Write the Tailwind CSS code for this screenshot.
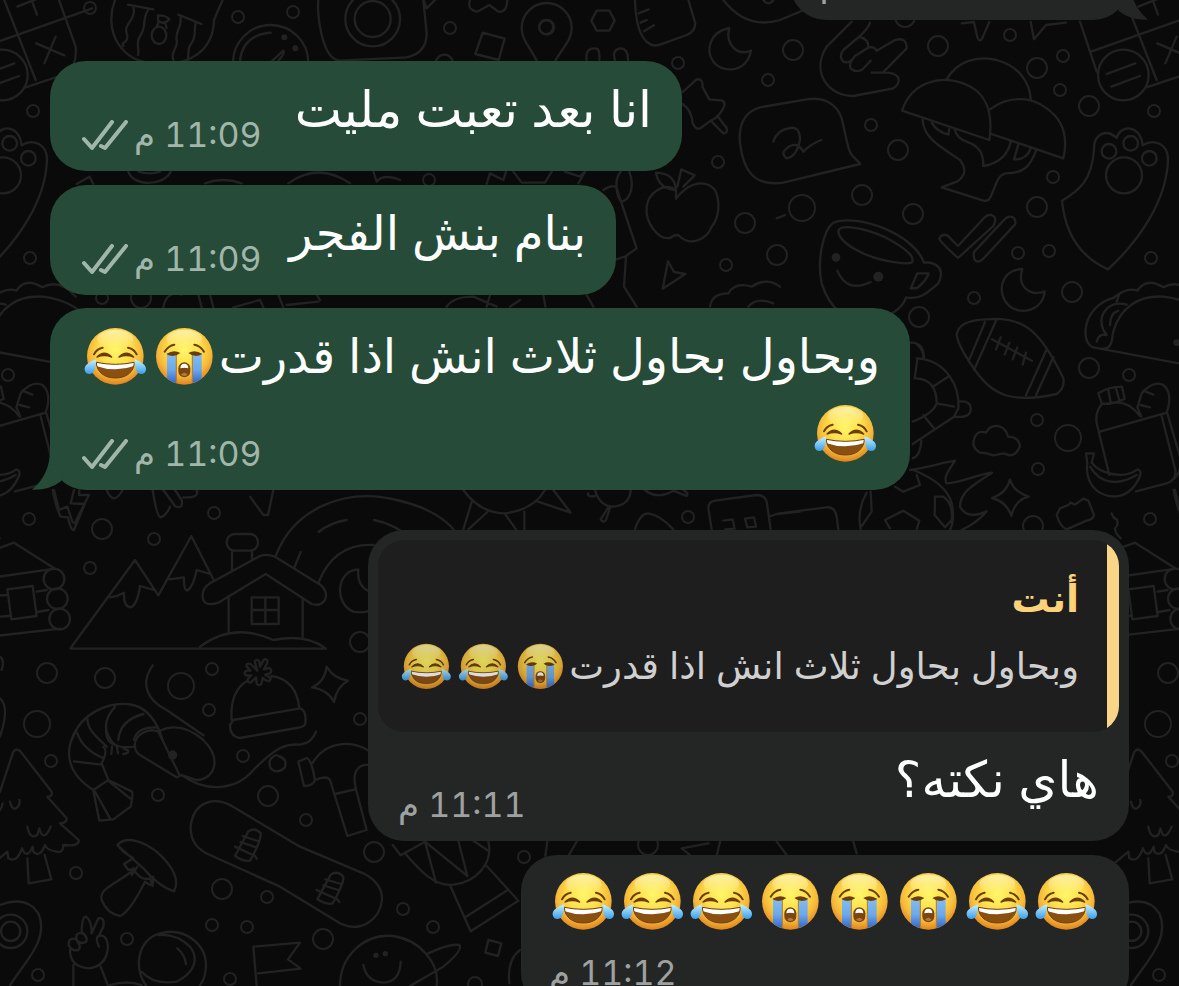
<!DOCTYPE html>
<html lang="ar" dir="rtl">
<head>
    <meta charset="UTF-8">
    <meta name="viewport" content="width=device-width, initial-scale=1.0">
    <title>محادثة</title>
    <script src="https://cdn.jsdelivr.net/npm/@tailwindcss/browser@4"></script>
</head>
<body class="relative h-screen overflow-hidden bg-[#0a0a0a] font-['Inter','DejaVu_Sans',sans-serif] text-white">

    <!-- Shared shapes -->
    <svg class="absolute h-0 w-0" aria-hidden="true">
        <defs>
            <radialGradient id="face" cx="0.5" cy="0.38" r="0.63">
                <stop offset="0" stop-color="#fff66a"/>
                <stop offset="0.45" stop-color="#fddf4b"/>
                <stop offset="0.75" stop-color="#f6b83a"/>
                <stop offset="1" stop-color="#dc801c"/>
            </radialGradient>
            <linearGradient id="shine" x1="0" y1="0" x2="0" y2="1">
                <stop offset="0" stop-color="#fffbd0" stop-opacity="0.7"/>
                <stop offset="1" stop-color="#fffbd0" stop-opacity="0"/>
            </linearGradient>
            <linearGradient id="stream" x1="0" y1="0" x2="0" y2="1">
                <stop offset="0" stop-color="#85bdf0"/>
                <stop offset="0.5" stop-color="#6ba9ec"/>
                <stop offset="1" stop-color="#2457c4"/>
            </linearGradient>
            <linearGradient id="tear" x1="0" y1="0" x2="0" y2="1">
                <stop offset="0" stop-color="#c8f2ff"/>
                <stop offset="1" stop-color="#3a9eea"/>
            </linearGradient>
            <clipPath id="faceClip"><circle r="84"/></clipPath>
            <clipPath id="mouthClip"><path d="M-57 18Q0 30 57 18C56 48 32 65 0 65S-56 48-57 18Z"/></clipPath>
        </defs>
        <symbol id="joy" viewBox="-103 -103 207 207">
            <circle r="85" fill="url(#face)"/>
            <ellipse cy="-52" rx="54" ry="28" fill="url(#shine)"/>
            <path d="M-64-6Q-57-22-38-26M64-6Q57-22 38-26" fill="none" stroke="#6d3d08" stroke-linecap="round" stroke-width="6"/>
            <path d="M-55 2Q-33-21-11 2Q-33-6-55 2ZM55 2Q33-21 11 2Q33-6 55 2Z" fill="#6d3d08" stroke="#6d3d08" stroke-width="4" stroke-linejoin="round"/>
            <g clip-path="url(#mouthClip)">
                <path d="M-60 10H60V70H-60Z" fill="#8a5012"/>
                <path d="M-60 10H60V28Q0 50-60 28Z" fill="#fff"/>
            </g>
            <path d="M-57 18Q0 30 57 18C56 48 32 65 0 65S-56 48-57 18Z" fill="none" stroke="#70400d" stroke-width="3"/>
            <path d="M-57 9C-75 15-94 26-92 40C-90 57-67 57-62 40Q-58 26-57 9ZM57 9C75 15 94 26 92 40C90 57 67 57 62 40Q58 26 57 9Z" fill="url(#tear)"/>
        </symbol>
        <symbol id="sob" viewBox="-103 -103 207 207">
            <circle r="85" fill="url(#face)"/>
            <ellipse cy="-52" rx="54" ry="28" fill="url(#shine)"/>
            <g clip-path="url(#faceClip)">
                <path d="M-52-10H-25V90H-52ZM25-10H52V90H25Z" fill="url(#stream)"/>
                <path d="M-24-4V90M24-4V90" stroke="#b5762a" stroke-width="3"/>
            </g>
            <path d="M-59-14Q-48-32-30-35M59-14Q48-32 30-35" fill="none" stroke="#6d3d08" stroke-width="6" stroke-linecap="round"/>
            <path d="M-54-7Q-32-22-12-10Q-32 6-54-7ZM54-7Q32-22 12-10Q32 6 54-7Z" fill="#6d3d08"/>
            <rect x="-18" y="18" width="36" height="45" rx="18" fill="#7c4510"/>
            <path d="M-12 36Q-12 22 0 22T12 36Q0 32-12 36Z" fill="#fff"/>
            <path d="M-10 55Q0 44 10 55Q0 63-10 55Z" fill="#b07a3a"/>
        </symbol>
        <symbol id="ticks" viewBox="0 0 46 31">
            <path d="M2 19L10 28L30 2M19 26L23 28L44 2" fill="none" stroke="currentColor" stroke-width="4" stroke-linecap="round" stroke-linejoin="round"/>
        </symbol>
        <symbol id="tail" viewBox="0 0 90 120">
            <path d="M54 0C54 50 36 88 0 119Q52 121 88 93L90 0Z" fill="currentColor"/>
        </symbol>
    </svg>

    <!-- Wallpaper -->
    <svg class="absolute top-0 left-0" width="2400" height="1000" aria-hidden="true" fill="none" stroke="#222222" stroke-linecap="round" stroke-linejoin="round">
        <g id="doodles">
            <g stroke-width="2">
                <circle cx="90" cy="8" r="6"/><circle cx="238" cy="17" r="6"/><circle cx="293" cy="12" r="6"/><circle cx="102" cy="298" r="6"/><circle cx="141" cy="298" r="10"/>
                <circle cx="450" cy="28" r="6"/><circle cx="678" cy="63" r="6"/><circle cx="768" cy="80" r="6"/><circle cx="718" cy="162" r="6"/><circle cx="745" cy="223" r="10"/>
                <circle cx="777" cy="255" r="10"/><circle cx="726" cy="265" r="6"/><circle cx="429" cy="180" r="6"/><circle cx="546" cy="27" r="7"/><circle cx="793" cy="50" r="10"/>
                <circle cx="905" cy="17" r="10"/><circle cx="938" cy="46" r="10"/><circle cx="1010" cy="35" r="6"/><circle cx="1037" cy="68" r="10"/><circle cx="1063" cy="56" r="6"/><circle cx="1060" cy="90" r="6"/>
                <circle cx="1089" cy="106" r="10"/><circle cx="871" cy="125" r="6"/><circle cx="898" cy="150" r="10"/><circle cx="862" cy="195" r="10"/><circle cx="802" cy="208" r="13"/>
                <circle cx="913" cy="214" r="10"/><circle cx="1053" cy="177" r="6"/><circle cx="1037" cy="207" r="10"/><circle cx="1154" cy="111" r="6"/><circle cx="974" cy="298" r="6"/>
                <circle cx="1018" cy="253" r="6"/><circle cx="1049" cy="251" r="6"/><circle cx="1072" cy="292" r="10"/><circle cx="1151" cy="258" r="6"/><circle cx="919" cy="317" r="10"/>
                <circle cx="1089" cy="368" r="10"/><circle cx="1129" cy="375" r="6"/><circle cx="1037" cy="420" r="6"/><circle cx="1068" cy="438" r="13"/><circle cx="1038" cy="469" r="6"/>
                <circle cx="1033" cy="526" r="10"/><circle cx="1150" cy="519" r="6"/><circle cx="102" cy="529" r="10"/><circle cx="154" cy="539" r="6"/><circle cx="90" cy="568" r="6"/>
                <circle cx="214" cy="513" r="6"/><circle cx="360" cy="642" r="10"/><circle cx="212" cy="669" r="6"/><circle cx="181" cy="686" r="13"/><circle cx="47" cy="673" r="10"/>
                <circle cx="105" cy="678" r="10"/><circle cx="37" cy="724" r="13"/><circle cx="209" cy="710" r="6"/><circle cx="360" cy="719" r="6"/><circle cx="51" cy="761" r="6"/>
                <circle cx="158" cy="795" r="6"/><circle cx="243" cy="756" r="6"/><circle cx="268" cy="796" r="10"/><circle cx="306" cy="820" r="6"/><circle cx="374" cy="852" r="10"/>
                <circle cx="76" cy="873" r="6"/><circle cx="222" cy="889" r="10"/><circle cx="267" cy="897" r="6"/><circle cx="212" cy="925" r="6"/><circle cx="247" cy="927" r="6"/>
                <circle cx="323" cy="939" r="10"/><circle cx="127" cy="939" r="6"/><circle cx="38" cy="975" r="6"/><circle cx="230" cy="979" r="6"/><circle cx="524" cy="857" r="6"/>
                <circle cx="403" cy="909" r="6"/><circle cx="433" cy="927" r="6"/><circle cx="475" cy="984" r="7"/><circle cx="648" cy="845" r="10"/><circle cx="688" cy="517" r="6"/>
            </g>
            <!-- top left: soap, compass, camera -->
            <g transform="scale(.33333)" stroke-width="7">
                <path d="M345 0C310 90 360 190 470 190C570 200 640 150 642 60Q650 40 668 0M384 14L460 28M400 22C410 60 370 70 380 100S360 125 370 138M444 30C425 60 440 80 422 105S420 145 414 165M535 44L604 72M542 52C545 90 525 90 530 120S510 150 520 180M588 66C580 90 590 110 574 130S570 160 562 184"/>
                <ellipse cx="477" cy="106" rx="22" ry="26"/><path d="M474 46Q500 46 508 58Q490 76 474 62ZM476 66L470 80M495 68L500 84"/>
                <circle cx="812" cy="188" r="113"/><path d="M720 180Q730 105 812 98M815 184L850 152Q856 158 835 182"/>
                <circle cx="853" cy="112" r="9" fill="#222222" stroke="none"/><circle cx="886" cy="145" r="9" fill="#222222" stroke="none"/>
                <circle cx="1118" cy="57" r="82"/><circle cx="1118" cy="57" r="54"/>
                <path d="M955 0C950 40 965 180 1020 182L1220 172Q1280 160 1280 100L1270 0M1270 0L1280 25L1310-5"/>
                <path d="M385 515C400 560 490 560 512 515M415 515Q450 525 480 515M230 552L268 530L280 552M615 550Q670 530 725 550M865 550Q955 485 1050 550M1120 515L1130 545Q1150 520 1200 540"/>
                <path d="M490 922Q500 870 545 884M595 884L605 922M630 884L640 922M700 922L780 900L790 922M835 884L850 922M950 884L960 900M860 915L955 905"/>
            </g>
            <!-- pin, tack, apple, moon -->
            <g transform="translate(390 0) scale(.33333)" stroke-width="7">
                <path d="M240 0Q230 30 262 35L298 15L325 35Q350 40 352 0M278 98L344 116L326 180L256 162ZM440 182C420 140 395 120 395 84A75 75 0 0 1 545 84C545 120 520 140 496 182M620 32H658L674 62L658 92H620L604 62ZM590 180Q585 140 620 146Q630 150 628 180M675 180Q665 150 690 145Q715 145 714 180"/>
                <circle cx="470" cy="82" r="22"/><circle cx="163" cy="190" r="26"/>
                <path d="M735 0Q738 110 780 132Q790 140 810 134L890 105Q915 95 916 70L895 0M746 40L776 28M752 68L770 60M762 94L792 76"/>
                <path d="M1018 84C960 95 945 150 970 185S1070 220 1083 152C1040 170 1005 130 1018 84Z"/>
                <path d="M878 276L920 238Q940 235 938 262L958 298L998 302Q1012 310 990 340Q980 355 962 362L932 384Q918 392 908 370Q905 330 878 312M962 362L1000 400Q1014 400 1010 384L982 348"/>
                <path d="M858 570C820 545 775 580 770 620C765 670 805 720 840 714Q860 700 868 708C900 740 950 720 965 680C990 650 990 600 975 570C950 540 900 540 858 596ZM858 570Q855 520 798 518Q805 565 855 570M862 560L874 508L914 526L880 560"/>
                <path d="M640 570Q670 550 680 565L740 745L708 768Q690 775 678 778M708 770L702 860L740 920M692 515C670 540 680 590 694 605C720 600 735 560 718 515M370 515L395 548H465L485 515M525 515L570 530L585 515L565 550M290 552L300 520L340 540L348 515"/>
                <path d="M834 784L852 816L886 822L818 866ZM960 920Q965 880 1015 880Q1035 845 1085 860Q1130 830 1170 860M1160 655L1185 645M1075 920Q1100 890 1150 910M170 920Q190 890 250 890L320 920M460 885L466 920M590 885L610 920M290 920L300 885M360 920L390 900"/>
                <path d="M1000 0Q1070 90 1170 60L1290 10M1120 0Q1135 20 1150 0"/>
                <path d="M1400 495L1410 490L1390 470Q1378 460 1372 430L1355 355C1340 310 1300 290 1250 298L1110 322C1060 335 1045 380 1050 430C1060 510 1090 560 1180 548L1410 492M1150 425Q1160 390 1200 384Q1230 378 1230 420Q1220 470 1190 475Q1170 460 1190 445Q1220 420 1240 455Q1265 430 1294 420"/>
            </g>
            <!-- right top: hand, tree, cup, paw, chocolate -->
            <g transform="translate(780 0) scale(.33333)" stroke-width="7">
                <path d="M215 65L140 140C90 220 150 290 220 288L340 265Q362 250 354 232Q345 218 315 218H275M270 68Q265 85 240 108L190 150Q175 170 190 185Q205 190 212 182M240 112Q265 115 265 142M272 182L248 208Q228 220 212 205Q205 190 225 168L262 145Q280 135 290 152L345 120Q380 110 380 145L312 214M545 70L582 66L592 112Q600 130 608 112L628 66M752 66L762 118L798 75L858 68"/>
                <path d="M366 332C395 245 480 225 550 250C620 275 640 340 628 420ZM500 238C530 185 590 165 650 180C720 200 750 250 752 298M630 328C680 290 750 285 800 325C850 360 865 410 850 475L634 402"/>
                <path d="M428 360C430 420 500 450 540 480Q570 520 530 545L485 562L610 602Q625 605 632 590C650 550 655 520 680 520C730 520 750 500 768 452M455 368Q470 395 505 404L508 386M524 388Q530 415 560 425C600 440 610 460 610 498Q680 485 692 425M715 434L702 478Q740 480 752 446"/>
                <path d="M644 668Q650 650 634 645Q622 643 612 654L534 738L502 706Q485 700 478 716Q480 725 534 774L640 678ZM706 672Q708 650 690 650Q680 650 670 662L582 756Q578 780 592 785Q602 785 612 774Z"/>
                <path d="M432 788C400 700 230 640 160 668C130 690 110 780 125 850C150 930 200 960 250 960C330 960 370 920 378 892C420 900 440 880 475 850C500 800 460 785 432 788ZM176 690C190 670 280 690 340 725C390 755 405 775 395 788C370 795 280 780 230 750C190 730 172 705 176 690ZM392 866L412 820H446Q440 840 412 864ZM172 812Q200 880 272 846"/>
                <circle cx="168" cy="772" r="13" fill="#222222" stroke="none"/><circle cx="295" cy="830" r="15" fill="#222222" stroke="none"/>
                <path d="M727 807C660 810 650 880 685 915S790 930 794 874C750 890 710 860 727 807Z"/>
                <path d="M846 602C855 700 900 770 984 808C1080 720 1160 600 1164 480C1165 430 1120 415 1088 436C1080 370 1020 375 1010 414C980 385 940 400 942 450C935 540 900 570 846 602Z"/>
                <circle cx="987" cy="454" r="22"/><circle cx="1052" cy="430" r="22"/><circle cx="1108" cy="475" r="22"/><circle cx="1032" cy="526" r="54"/>
                <path d="M900 65L950 215M1020-40L1130 240M935 154L1300 25M1100 262L1220 222Q1255 200 1250 140L1200 0M1075 20L1140-6M1118 0L1134 44M1132 130L1216 166M1190 110L1156 190"/>
                <circle cx="1030" cy="225" r="76"/><path d="M980 222L1066 190M994 260L1080 228"/>
            </g>
            <!-- right middle: football, taco, bag, lifebuoy, ball -->
            <g transform="translate(780 270) scale(.33333)" stroke-width="7">
                <path d="M530 195Q535 150 620 148C740 135 790 200 850 325Q855 355 830 372C700 400 640 380 585 300Q535 230 530 195ZM615 156L568 268M648 152L582 300M800 238L738 376M820 262L768 376M636 208L756 272M662 202L648 238M688 218L674 254M712 232L698 268M738 248L728 284"/>
                <path d="M940 232C900 220 905 110 1000 84Q1040 50 1072 62Q1100 20 1150 52Q1190 30 1230 60L1250 80M940 232L1250 290M965 236C1000 240 995 200 1000 185C1020 110 1080 75 1150 80Q1240 90 1290 150M1010 95L1018 72M1040 104C990 90 950 130 970 180L980 195M950 215Q955 190 980 195M990 165Q990 130 1015 122"/>
                <circle cx="1190" cy="218" r="10" fill="#222222" stroke="none"/>
                <path d="M410 222Q430 240 430 260M410 265C500 270 540 350 535 415L522 440L398 522M410 325Q470 330 470 400Q460 430 398 455M412 268L404 325M508 318L462 348M470 400L522 410M430 436L462 475M535 395Q575 390 572 420Q570 445 522 440M424 512Q420 560 398 565M390 218Q430 215 432 262"/>
                <path d="M600 548Q570 530 585 500Q595 480 618 488Q630 465 655 468Q680 475 684 500Q715 500 720 528Q710 555 690 556L670 550L640 556L620 550Z"/>
                <path d="M390 600C450 590 480 580 525 572C500 610 490 625 500 640C540 640 600 610 636 608C570 650 540 670 540 710Q560 750 620 724Q590 760 545 780M400 600Q500 640 515 700Q525 750 510 780M690 628Q700 665 746 680Q705 690 694 738Q680 695 636 684Q680 670 690 628ZM272 665L275 725L245 768M260 668Q230 720 242 778M330 775L315 750L370 722L418 752L410 778M465 680H490Q520 700 515 750L495 772L464 735ZM370 665L420 645L410 615M345 650L370 665"/>
                <path d="M0 730L140 712Q165 710 170 740L175 778M840 715L865 705L872 698L885 704L910 686L925 692L942 735Q940 748 920 752L860 778Q840 770 830 735ZM995 730Q1000 745 1010 748Q1018 765 1005 775Q1005 790 1022 805"/>
                <path d="M955 370Q985 350 1026 350L1034 386Q1010 400 966 402ZM985 360L992 398M1008 355L1018 390M966 402Q945 425 950 460L988 615M988 402Q1040 385 1080 438M960 485L1160 428Q1180 370 1150 345Q1120 330 1085 370L1072 412L1084 440M1090 362L1120 374M1082 405L1110 412M1144 435L1186 600Q1190 630 1160 640L1068 664M1162 430L1200 560Q1210 610 1170 636M918 550H942L935 578C960 610 1030 630 1072 598Q1085 600 1080 618C1050 690 990 690 950 662Q915 630 922 580ZM930 590C960 640 1010 650 1070 615"/>
                <path d="M1185 660L1200 720L1225 710L1240 755Q1250 765 1252 750L1290 675H1260L1262 650"/>
            </g>
            <!-- cabin and tree on the right edge -->
            <g transform="translate(1121 490) scale(.33333)" stroke-width="7">
                <path d="M-75 200L42 158L165 236M-75 270L165 236M-75 320L20 315M110 305L140 300M-75 385L28 378M112 366L145 360M-75 445L180 416M22 298L98 288L110 378L34 388Z"/>
                <circle cx="162" cy="267" r="31"/><circle cx="172" cy="326" r="31"/><circle cx="179" cy="387" r="31"/>
                <path d="M-70 990L0 905L40 785Q50 772 62 785L155 905Q158 920 142 920L200 985Q200 1000 180 1000L236 1050Q240 1070 190 1065Q190 1090 170 1085Q140 1080 135 1065Q120 1105 100 1085L98 1070Q80 1110 66 1075Q50 1120 25 1105L22 1085L-20 1120M82 1105L86 1180L154 1168L134 1095M30 935Q35 960 48 955Q62 945 58 930M82 1010Q90 1050 112 1035L118 1015Q130 1060 152 1010M-10 970Q5 960 8 940"/>
                <path d="M0 1245Q80 1215 115 1270C150 1350 70 1420 30 1486M0 500Q15 510 5 540M0 625Q30 650 0 740"/>
                <circle cx="32" cy="1324" r="50"/><circle cx="32" cy="1324" r="29"/>
            </g>
            <!-- mountains, house, hat -->
            <g transform="translate(0 490) scale(.33333)" stroke-width="7">
                <path d="M212 476H978Q920 430 820 450Q700 395 600 470M212 474L405 210L475 316L574 138L640 268M330 322Q350 320 372 308Q370 350 392 352Q412 345 420 288L462 300M508 268L552 262Q550 300 562 302Q580 290 590 240L630 252M686 320V425M908 330V440M610 330Q600 300 630 280L780 198Q800 190 825 200L962 285Q985 305 975 330Q960 350 935 342L797 252L655 338Q620 350 610 330M696 240V184M756 184V206M755 322H836V402H755ZM796 322V402M755 360H836"/>
                <rect x="680" y="132" width="94" height="50" rx="24"/>
                <path d="M828 196C880 60 1030-10 1190 30Q1320 60 1370 130M955 280Q1000 160 1120 165M902 186L882 235M956 126Q990 98 1040 90M1122 90Q1180 100 1240 150M1075 238C1010 240 1000 340 1060 365Q1090 370 1110 362M1075 238Q1070 290 1110 305"/>
                <path d="M158 0Q170 60 182 80L204 82Q212 122 222 120L254 42L212 40L222 0M320 0Q340 50 368 0M458 0Q470 80 482 82Q500 75 510 50M490 0L525 48Q550 60 545 30L525 0M550 22Q600 25 590 0M750 20L790 75H804L820 0"/>
                <path d="M695 690C690 630 710 590 742 572M815 558Q890 570 898 655M700 690L900 655Q920 660 916 700Q915 710 890 714L720 744Q690 740 690 705Z"/>
                <path d="M772 542L764 515Q770 505 778 514L780 530L792 508Q804 506 802 518L792 538L808 534Q818 540 810 550L796 554L812 564Q812 576 800 572L788 564L784 582Q774 590 770 580L768 562L752 578Q740 578 744 566L754 556L738 556Q728 548 740 542L752 542L740 530Q738 518 752 522Z"/>
                <path d="M980 530Q1000 565 1044 572Q1010 590 1002 636Q985 600 936 592Q975 575 980 530ZM458 526C420 580 440 630 500 660L610 736M215 750C240 670 330 630 400 645Q460 660 488 750M262 680C260 720 290 740 320 770M345 650C300 700 320 740 345 765M355 750Q360 690 430 672M402 750Q410 710 470 712"/>
            </g>
            <!-- croissant, fish, skateboard, mushroom, hand -->
            <g transform="translate(0 730) scale(.33333)" stroke-width="7">
                <path d="M230 0C190 60 200 130 280 180L325 150L305 100Q325 60 310 50M232 10Q250 60 312 85M222 94L305 104M280 182L298 272L340 268L392 230Q400 190 396 185L325 150M285 185L330 265M328 155L390 205M318 0Q320 40 345 44Q360 55 405 50M336 50L334 72M350 46L354 70M370 55L385 62Q385 70 370 72"/>
                <path d="M405 50C400 20 440-10 475 5L540 138L530 142L420 75Q405 65 405 50M475 5Q540-30 610 30C670 90 640 150 590 150L545 135M545 135C620 190 710 180 760 120C830 50 860 40 900 44Q935 40 948 5M830 75Q800 85 812 115Q830 135 855 112Q862 85 835 78"/>
                <circle cx="518" cy="75" r="14" fill="#222222" stroke="none"/>
                <path d="M690 225C640 200 580 215 572 290Q570 350 630 375L840 470L1020 580C1080 610 1140 570 1146 510Q1148 460 1090 430L900 350ZM705 378L745 304Q765 290 782 310Q785 330 750 392Q730 395 705 378ZM722 336L768 352M705 350L765 378M728 318L776 334M765 378L770 386M952 508L992 434Q1012 420 1030 440Q1032 460 998 520Q980 525 952 508ZM970 466L1015 480M950 480L1012 508M976 448L1024 462M1012 508L1018 516"/>
                <path d="M895 95L920 84Q935 90 945 150Q940 168 912 168ZM938 98C980 30 1060 30 1110 65M945 150Q980 135 990 150L1042 318L1100 300L1068 178Q1050 105 1105 104M1005 192L1065 178"/>
                <path d="M352 345C380 315 430 335 470 365C520 410 540 450 522 484C490 475 460 450 430 415L380 370ZM352 345L370 365L400 385L372 402L385 420L400 418M395 425L320 475Q300 490 305 510Q320 550 360 558Q390 545 435 455M400 415Q420 455 450 445L458 468L460 440M395 435L412 410M435 455L450 465"/>
                <path d="M245 610Q245 560 258 560Q275 570 275 610L295 565Q315 560 310 590L295 620M245 610Q225 605 230 630Q240 645 258 635Q265 625 250 610M230 628Q205 620 206 645Q215 665 235 660Q245 650 232 635M210 660Q210 710 265 715Q320 710 324 650Q320 610 295 618Q285 625 297 650M220 705V770M302 710L325 770"/>
                <path d="M440 768C400 720 410 630 480 610S620 640 618 710Q615 750 598 768M425 725Q460 765 530 755C580 730 600 690 570 650Q530 610 475 615M532 655Q555 675 558 702M330 765Q380 750 425 765M760 650L900 638L864 688L902 716L774 730M760 650L770 768"/>
                <path d="M1020 768C1020 680 1090 610 1180 618C1260 630 1320 700 1310 768M1090 705Q1100 755 1150 758Q1200 755 1202 695M1285 670Q1350 640 1378 645Q1390 660 1330 710L1230 768"/>
                <circle cx="1128" cy="676" r="8" fill="#222222" stroke="none"/><circle cx="1156" cy="671" r="8" fill="#222222" stroke="none"/>
            </g>
            <!-- small cuts between the bubbles -->
            <g transform="translate(380 820) scale(.33333)" stroke-width="7">
                <path d="M38 75L62 106L135 65M75 100C120 150 160 200 220 194C290 185 340 130 325 65M135 65L168 188M135 65L262 168L235 62M280 62L325 92M212 200L272 334L415 242L320 138M258 290L380 212M496 108L502 65M565 108L590 65M325 360L364 370L354 408L316 398ZM420 390Q380 420 388 490M905 85L985 70M1010 108L1020 65M905 85L930 105M1190 65L1220 105M1430 100L1420 65"/>
            </g>
            <g transform="translate(400 480) scale(.33333)" stroke-width="7">
                <path d="M190 30Q240 100 315 100Q400 90 435 30M215 66L190 148M262 96L205 148M315 102L348 148M373 95V148M412 64L512 98L460 30M585 30Q600 80 640 80Q690 75 692 30M565 40Q560 52 585 48M625 82L602 118Q608 130 618 120L630 84M735 30Q770 60 820 32L860 48Q868 40 850 30M705 148Q720 100 745 100Q780 105 820 148M935 148L925 85Q925 65 945 62L1070 45Q1095 45 1100 65L1112 148M970 122L998 118L1004 146L976 148M1035 116L1062 112L1068 140L1042 142ZM1112 108L1130 102L1200 95"/>
            </g>
        </g>
        <use href="#doodles" x="-1121"/>
        <use href="#doodles" x="1121"/>
    </svg>

    <main class="relative flex flex-col items-end px-[50px] leading-[76px] tabular-nums">

        <div class="relative -mt-[90px] flex h-[110px] w-[339px] items-end self-start rounded-[36px] bg-[#242626] pl-[30px]">
            <svg class="absolute right-[-19px] bottom-0 h-10 w-[30px] -scale-x-100 text-[#242626]"><use href="#tail"/></svg>
            <time class="mr-auto mb-[9px] text-[34px] leading-[54px] text-[#9fa1a0]">11:08 م</time>
        </div>

        <div class="mt-[41px] flex h-[110px] w-[632px] max-w-full items-end justify-between rounded-[36px] bg-[#264b39] pr-[30px] pl-8">
            <p class="mb-6 text-[50px] leading-[76px]">انا بعد تعبت مليت</p>
            <div class="mb-[9px] flex items-center gap-[6px] text-[#a1b6aa]">
                <time class="text-[34px] leading-[54px]">11:09 م</time>
                <svg class="h-[31px] w-[46px]" role="img" aria-label="تم التسليم"><use href="#ticks"/></svg>
            </div>
        </div>

        <div class="mt-[14px] flex h-[110px] w-[566px] max-w-full items-end justify-between rounded-[36px] bg-[#264b39] pr-[30px] pl-8">
            <p class="mb-6 text-5xl leading-[76px]">بنام بنش الفجر</p>
            <div class="mb-[9px] flex items-center gap-[6px] text-[#a1b6aa]">
                <time class="text-[34px] leading-[54px]">11:09 م</time>
                <svg class="h-[31px] w-[46px]" role="img" aria-label="تم التسليم"><use href="#ticks"/></svg>
            </div>
        </div>

        <div class="relative mt-[13px] w-[860px] max-w-full rounded-[36px] bg-[#264b39] pt-[10px] pr-[30px] pl-8">
            <svg class="absolute bottom-0 left-[-18px] h-10 w-[30px] text-[#264b39]"><use href="#tail"/></svg>
            <p class="flex items-center text-5xl leading-[76px] whitespace-nowrap">وبحاول بحاول ثلاث انش اذا قدرت
                <svg class="size-[69px] shrink-0" role="img" aria-label="😭"><use href="#sob"/></svg>
                <svg class="size-[69px] shrink-0" role="img" aria-label="😂"><use href="#joy"/></svg>
            </p>
            <div class="flex h-24 items-end justify-between">
                <svg class="mb-[22px] size-[69px]" role="img" aria-label="😂"><use href="#joy"/></svg>
                <div class="mb-[9px] flex items-center gap-[6px] text-[#a1b6aa]">
                    <time class="text-[34px] leading-[54px]">11:09 م</time>
                    <svg class="h-[31px] w-[46px]" role="img" aria-label="تم التسليم"><use href="#ticks"/></svg>
                </div>
            </div>
        </div>

        <div class="mt-10 w-[761px] max-w-full self-start rounded-[36px] bg-[#242626] pt-[10px]">
            <blockquote class="mx-[10px] h-[192px] overflow-hidden rounded-[26px] bg-[#1e1e1e]">
                <div class="h-full border-r-12 border-[#f9d588] pt-6 pr-7 leading-[68px]">
                    <p class="text-[38px] font-bold text-[#fbd27a]">أنت</p>
                    <p class="flex items-center text-[37px] whitespace-nowrap text-[#d0d0d0]">وبحاول بحاول ثلاث انش اذا قدرت
                        <svg class="h-[55px] w-[57px] shrink-0 opacity-85" role="img" aria-label="😭"><use href="#sob"/></svg>
                        <svg class="h-[55px] w-[57px] shrink-0 opacity-85" role="img" aria-label="😂"><use href="#joy"/></svg>
                        <svg class="h-[55px] w-[57px] shrink-0 opacity-85" role="img" aria-label="😂"><use href="#joy"/></svg>
                    </p>
                </div>
            </blockquote>
            <div class="flex h-[109px] items-end justify-between px-[30px]">
                <p class="mb-6 text-[50px] leading-[76px]">هاي نكته؟</p>
                <time class="mb-[9px] text-[34px] leading-[54px] text-[#9fa1a0]">11:11 م</time>
            </div>
        </div>

        <div class="mt-[14px] w-[608px] max-w-full self-start rounded-[36px] bg-[#242626] px-7 pt-3">
            <div class="flex" role="img" aria-label="😂😂😭😭😭😂😂😂">
                <svg class="size-[69px]"><use href="#joy"/></svg>
                <svg class="size-[69px]"><use href="#joy"/></svg>
                <svg class="size-[69px]"><use href="#sob"/></svg>
                <svg class="size-[69px]"><use href="#sob"/></svg>
                <svg class="size-[69px]"><use href="#sob"/></svg>
                <svg class="size-[69px]"><use href="#joy"/></svg>
                <svg class="size-[69px]"><use href="#joy"/></svg>
                <svg class="size-[69px]"><use href="#joy"/></svg>
            </div>
            <div class="flex justify-end pt-[10px] pb-[9px]">
                <time class="text-[34px] leading-[54px] text-[#9fa1a0]">11:12 م</time>
            </div>
        </div>

    </main>

</body>
</html>
